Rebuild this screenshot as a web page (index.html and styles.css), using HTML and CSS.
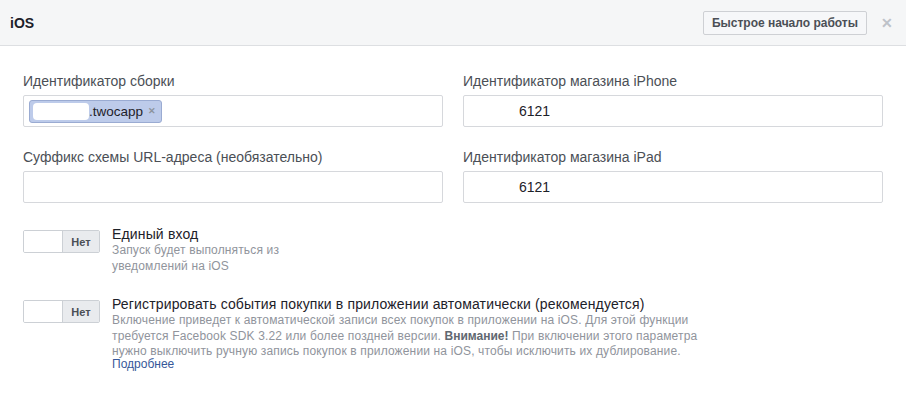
FILE: index.html
```html
<!DOCTYPE html>
<html lang="ru">
<head>
    <meta charset="UTF-8">
    <title>iOS</title>
    <link rel="stylesheet" href="styles.css">
</head>
<body>
    <div class="panel">
        <div class="panel-header">
            <div class="panel-title">iOS</div>
            <div class="header-actions">
                <button class="quick-start">Быстрое начало работы</button>
                <span class="close">&#x2715;</span>
            </div>
        </div>

        <div class="panel-body">
            <div class="fields">
                <div class="field">
                    <label>Идентификатор сборки</label>
                    <div class="token-input">
                        <span class="token"><span class="token-hidden"></span>.twocapp<span class="token-remove">&#x2715;</span></span>
                    </div>
                </div>
                <div class="field">
                    <label>Идентификатор магазина iPhone</label>
                    <input type="text" class="text-input indented" value="6121">
                </div>
                <div class="field">
                    <label>Суффикс схемы URL-адреса (необязательно)</label>
                    <input type="text" class="text-input">
                </div>
                <div class="field">
                    <label>Идентификатор магазина iPad</label>
                    <input type="text" class="text-input indented" value="6121">
                </div>
            </div>

            <div class="option">
                <div class="switch">
                    <span class="switch-on"></span>
                    <span class="switch-off">Нет</span>
                </div>
                <div class="option-text">
                    <div class="option-title">Единый вход</div>
                    <div class="option-desc narrow">Запуск будет выполняться из уведомлений на iOS</div>
                </div>
            </div>

            <div class="option">
                <div class="switch">
                    <span class="switch-on"></span>
                    <span class="switch-off">Нет</span>
                </div>
                <div class="option-text">
                    <div class="option-title">Регистрировать события покупки в приложении автоматически (рекомендуется)</div>
                    <div class="option-desc wide">
                        Включение приведет к автоматической записи всех покупок в приложении на iOS. Для этой функции
                        требуется Facebook SDK 3.22 или более поздней версии. <strong>Внимание!</strong> При включении этого параметра
                        нужно выключить ручную запись покупок в приложении на iOS, чтобы исключить их дублирование.
                    </div>
                    <a class="more-link" href="#">Подробнее</a>
                </div>
            </div>
        </div>
    </div>
</body>
</html>
```

FILE: styles.css
```css
* {
    margin: 0;
    padding: 0;
    box-sizing: border-box;
    font-family: Helvetica, "Liberation Sans", Arial, sans-serif;
}

body {
    background-color: #fff;
    color: #1d2129;
}

.panel-header {
    display: flex;
    justify-content: space-between;
    align-items: center;
    height: 46px;
    padding: 0 13px 0 10px;
    background-color: #f5f6f7;
    border-bottom: 1px solid #dddfe2;
}

.panel-title {
    font-size: 14px;
    font-weight: bold;
    color: #1d2129;
}

.header-actions {
    display: flex;
    align-items: center;
    gap: 14px;
}

.quick-start {
    height: 24px;
    padding: 0 8px;
    font-size: 12px;
    font-weight: bold;
    color: #4b4f56;
    background-color: #f6f7f9;
    border: 1px solid #ced0d4;
    border-radius: 2px;
}

.close {
    font-size: 14px;
    font-weight: bold;
    color: #bec2c9;
}

.panel-body {
    padding: 26px 23px;
}

.fields {
    display: grid;
    grid-template-columns: 420px 420px;
    column-gap: 20px;
    row-gap: 21px;
}

.field label {
    display: block;
    font-size: 14px;
    line-height: 18px;
    color: #4b4f56;
    margin-bottom: 5px;
}

.text-input,
.token-input {
    display: block;
    width: 100%;
    height: 32px;
    border: 1px solid #d6d8dc;
    border-radius: 2px;
    font-size: 14px;
    color: #1d2129;
    padding: 0 8px;
    outline: none;
}

.text-input.indented {
    text-indent: 47px;
}

.token-input {
    display: flex;
    align-items: center;
    padding: 0 5px;
}

.token {
    display: inline-flex;
    align-items: center;
    height: 23px;
    padding: 0 5px 0 3px;
    font-size: 13.5px;
    color: #1d2129;
    background-color: #bdcbea;
    border: 1px solid #9aabd2;
    border-radius: 3px;
}

.token-hidden {
    display: inline-block;
    width: 56px;
    height: 17px;
    background-color: #fff;
    border-radius: 4px;
}

.token-remove {
    margin-left: 5px;
    font-size: 9px;
    font-weight: bold;
    color: #8d949e;
}

.option {
    display: flex;
    align-items: flex-start;
    gap: 12px;
    margin-top: 22px;
}

.option + .option {
    margin-top: 21px;
}

.switch {
    display: flex;
    width: 77px;
    height: 23px;
    margin-top: 5px;
    border: 1px solid #ccd0d5;
    border-radius: 2px;
    overflow: hidden;
}

.switch-on {
    width: 39px;
    background-color: #fff;
    border-right: 1px solid #ccd0d5;
}

.switch-off {
    flex: 1;
    display: flex;
    align-items: center;
    justify-content: center;
    font-size: 11px;
    font-weight: bold;
    color: #4b4f56;
    background-color: #e9ebee;
}

.option-title {
    font-size: 14px;
    line-height: 18px;
    letter-spacing: 0.15px;
    color: #1d2129;
}

.option-desc {
    font-size: 12px;
    line-height: 15.5px;
    letter-spacing: 0.15px;
    color: #90949c;
}

.option-desc strong {
    color: #606770;
    letter-spacing: 0;
}

.option-desc.narrow {
    max-width: 175px;
}

.option-desc.wide {
    max-width: 595px;
}

.more-link {
    display: block;
    margin-top: -3px;
    font-size: 12px;
    line-height: 15px;
    color: #365899;
    text-decoration: none;
}
```
